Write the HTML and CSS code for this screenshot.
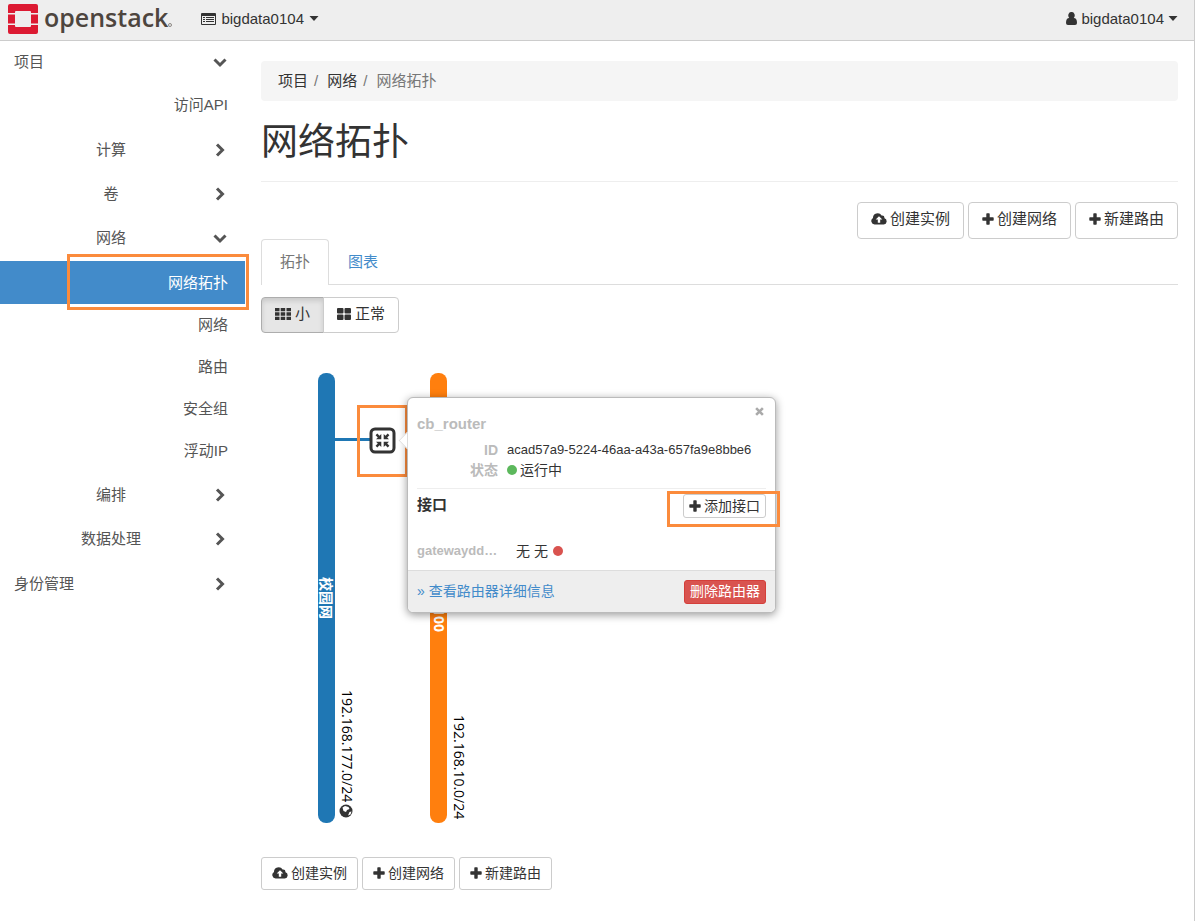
FILE: index.html
```html
<!DOCTYPE html>
<html lang="zh-CN">
<head>
<meta charset="utf-8">
<title>网络拓扑 - OpenStack</title>
<link rel="stylesheet" href="styles.css">
</head>
<body>
<svg class="defs" aria-hidden="true">
  <symbol id="i-cloud" viewBox="0 0 16 12"><path fill-rule="evenodd" d="M3.600 11.500A3.500 3.500 0 0 1 2 5 4.600 4.600 0 0 1 10.600 2.600 2.600 2.600 0 0 1 13.500 5.300 3.200 3.200 0 0 1 12.800 11.500ZM8 3.200 4.700 6.600H6.800V9.800H9.200V6.600H11.300Z"/></symbol>
  <symbol id="i-plus" viewBox="0 0 12 12"><path d="M4.300 1Q4.300 .300 5 .300H7Q7.700 .300 7.700 1V4.300H11Q11.700 4.300 11.700 5V7Q11.700 7.700 11 7.700H7.700V11Q7.700 11.700 7 11.700H5Q4.300 11.700 4.300 11V7.700H1Q.300 7.700 .300 7V5Q.300 4.300 1 4.300H4.300Z"/></symbol>
  <symbol id="i-right" viewBox="0 0 14 14"><path d="M4 1.500 9.500 7 4 12.500" fill="none" stroke="currentColor" stroke-width="3"/></symbol>
  <symbol id="i-down" viewBox="0 0 14 14"><path d="M1.500 4.500 7 10 12.500 4.500" fill="none" stroke="currentColor" stroke-width="3"/></symbol>
  <symbol id="i-caret" viewBox="0 0 10 5"><path d="M.500 0H9.500L5 5Z"/></symbol>
</svg>
<header class="topbar">
  <a class="brand" href="#">
    <svg class="brand-mark" viewBox="0 0 30 30" aria-hidden="true">
      <path fill="#dc1a32" fill-rule="evenodd" d="M2 0H28Q30 0 30 2V9H23V8Q23 7 22 7H8Q7 7 7 8V9H0V2Q0 0 2 0ZM0 10.500H7V19.500H0ZM23 10.500H30V19.500H23ZM0 21H7V22Q7 23 8 23H22Q23 23 23 22V21H30V28Q30 30 28 30H2Q0 30 0 28Z"/>
    </svg>
    <span class="brand-name">openstack</span>
    <svg width="4" height="4" viewBox="0 0 4 4" class="brand-dot" aria-hidden="true"><circle cx="2" cy="2" r="1.500" fill="none" stroke="currentColor" stroke-width="1"/></svg>
  </a>
  <button class="menu" type="button">
    <svg width="15" height="12" viewBox="0 0 15 12" aria-hidden="true"><path fill-rule="evenodd" d="M1 0H14Q15 0 15 1V11Q15 12 14 12H1Q0 12 0 11V1Q0 0 1 0ZM1 3V11H14V3Z"/><path d="M2 4H4V5H2ZM5 4H13V5H5ZM2 6H4V7H2ZM5 6H13V7H5ZM2 8H4V9H2ZM5 8H13V9H5Z"/></svg>
    bigdata0104
    <svg class="caret" aria-hidden="true"><use href="#i-caret"/></svg>
  </button>
  <button class="menu menu-user" type="button">
    <svg width="11" height="13" viewBox="0 0 11 13" aria-hidden="true"><path d="M5.500 0A3 3.500 0 0 1 7.800 6Q11 6 11 11 11 13 9 13H2Q0 13 0 11 0 6 3.200 6A3 3.500 0 0 1 5.500 0Z"/></svg>
    bigdata0104
    <svg class="caret" aria-hidden="true"><use href="#i-caret"/></svg>
  </button>
</header>
<div class="layout">
  <nav class="sidebar">
    <a class="row top first" href="#"><span>项目</span><svg class="chev" aria-hidden="true"><use href="#i-down"/></svg></a>
    <a class="row leaf tall" href="#">访问API</a>
    <a class="row group" href="#"><span>计算</span><svg class="chev" aria-hidden="true"><use href="#i-right"/></svg></a>
    <a class="row group" href="#"><span>卷</span><svg class="chev" aria-hidden="true"><use href="#i-right"/></svg></a>
    <a class="row group" href="#"><span>网络</span><svg class="chev" aria-hidden="true"><use href="#i-down"/></svg></a>
    <a class="row leaf active" href="#">网络拓扑<i class="mark mark-nav"></i></a>
    <a class="row leaf" href="#">网络</a>
    <a class="row leaf" href="#">路由</a>
    <a class="row leaf" href="#">安全组</a>
    <a class="row leaf" href="#">浮动IP</a>
    <a class="row group" href="#"><span>编排</span><svg class="chev" aria-hidden="true"><use href="#i-right"/></svg></a>
    <a class="row group" href="#"><span>数据处理</span><svg class="chev" aria-hidden="true"><use href="#i-right"/></svg></a>
    <a class="row top" href="#"><span>身份管理</span><svg class="chev" aria-hidden="true"><use href="#i-right"/></svg></a>
  </nav>
  <main class="content">
    <ol class="crumbs">
      <li><a href="#">项目</a></li>
      <li><a href="#">网络</a></li>
      <li>网络拓扑</li>
    </ol>
    <h1>网络拓扑</h1>
    <div class="actions">
      <button class="btn" type="button"><svg class="cloud" aria-hidden="true"><use href="#i-cloud"/></svg>创建实例</button>
      <button class="btn" type="button"><svg class="plus" aria-hidden="true"><use href="#i-plus"/></svg>创建网络</button>
      <button class="btn" type="button"><svg class="plus" aria-hidden="true"><use href="#i-plus"/></svg>新建路由</button>
    </div>
    <div class="tabs">
      <a class="tab current" href="#">拓扑</a>
      <a class="tab" href="#">图表</a>
    </div>
    <div class="toggle">
      <button class="btn pressed" type="button"><svg width="16" height="12" viewBox="0 0 16 12" aria-hidden="true"><path d="M0 0H4.500V3.300H0ZM5.700 0H10.200V3.300H5.700ZM11.500 0H16V3.300H11.500ZM0 4.300H4.500V7.700H0ZM5.700 4.300H10.200V7.700H5.700ZM11.500 4.300H16V7.700H11.500ZM0 8.700H4.500V12H0ZM5.700 8.700H10.200V12H5.700ZM11.500 8.700H16V12H11.500Z"/></svg>小</button>
      <button class="btn" type="button"><svg width="14" height="12" viewBox="0 0 14 12" aria-hidden="true"><path d="M1 0H5.500Q6.500 0 6.500 1V4.500Q6.500 5.500 5.500 5.500H1Q0 5.500 0 4.500V1Q0 0 1 0ZM8.500 0H13Q14 0 14 1V4.500Q14 5.500 13 5.500H8.500Q7.500 5.500 7.500 4.500V1Q7.500 0 8.500 0ZM1 6.500H5.500Q6.500 6.500 6.500 7.500V11Q6.500 12 5.500 12H1Q0 12 0 11V7.500Q0 6.500 1 6.500ZM8.500 6.500H13Q14 6.500 14 7.500V11Q14 12 13 12H8.500Q7.500 12 7.500 11V7.500Q7.500 6.500 8.500 6.500Z"/></svg>正常</button>
    </div>
    <section class="topology">
      <svg class="canvas" width="520" height="512" viewBox="0 0 520 512">
        <rect x="57" y="40" width="17" height="450" rx="8" fill="#1f77b4"/>
        <rect x="169" y="40" width="17" height="450" rx="8" fill="#ff7f0e"/>
        <rect x="74" y="105" width="36" height="3" fill="#1f77b4"/>
        <text class="net-name" transform="translate(60 265) rotate(90)" text-anchor="middle">校园网</text>
        <text class="net-name" transform="translate(173 299) rotate(90)" text-anchor="end">cb_net_100</text>
        <text class="cidr" transform="translate(81 357) rotate(90)">192.168.177.0/24</text>
        <text class="cidr" transform="translate(193 382) rotate(90)">192.168.10.0/24</text>
        <circle cx="85" cy="478" r="6.500"/>
        <path fill="#fff" d="M81.500 474.500 84 473 87.500 474 88.500 476 86 477 85 479 82.500 478ZM88.500 479 90.500 478.500 89.500 481.500 87 482.500Z"/>
        <rect x="110" y="96" width="23" height="23" rx="4" fill="#fff" stroke="#333" stroke-width="3"/>
        <g fill="#333"><path id="arr" d="M116.300 100.600 118.500 102.800 120.300 101V106.300H115L116.800 104.500 114.600 102.300Z"/><use href="#arr" transform="rotate(90 121.500 107.500)"/><use href="#arr" transform="rotate(180 121.500 107.500)"/><use href="#arr" transform="rotate(270 121.500 107.500)"/></g>
      </svg>
      <i class="mark mark-router"></i>
      <div class="popover">
        <button class="close" type="button" aria-label="关闭"><svg width="9" height="9" viewBox="0 0 8 8" aria-hidden="true"><path d="M1 1 7 7M7 1 1 7" stroke="currentColor" stroke-width="2.300"/></svg></button>
        <h2>cb_router</h2>
        <dl>
          <dt>ID</dt><dd class="uuid">acad57a9-5224-46aa-a43a-657fa9e8bbe6</dd>
          <dt>状态</dt><dd><i class="dot up"></i>运行中</dd>
        </dl>
        <div class="ports-head">
          <h3>接口</h3>
          <button class="btn mini" type="button"><svg class="plus" aria-hidden="true"><use href="#i-plus"/></svg>添加接口</button>
          <i class="mark mark-add"></i>
        </div>
        <div class="port"><span class="port-name">gatewaydd…</span><span>无 无</span><i class="dot down"></i></div>
        <footer>
          <a href="#">» 查看路由器详细信息</a>
          <button class="btn mini danger" type="button">删除路由器</button>
        </footer>
      </div>
    </section>
    <div class="actions small">
      <button class="btn" type="button"><svg class="cloud" aria-hidden="true"><use href="#i-cloud"/></svg>创建实例</button>
      <button class="btn" type="button"><svg class="plus" aria-hidden="true"><use href="#i-plus"/></svg>创建网络</button>
      <button class="btn" type="button"><svg class="plus" aria-hidden="true"><use href="#i-plus"/></svg>新建路由</button>
    </div>
  </main>
</div>
</body>
</html>
```
FILE: styles.css
```css
* { box-sizing: border-box; }
body {
  margin: 0;
  min-height: 100vh;
  border-right: 1px solid #ccc;
  background: #fff;
  color: #333;
  font: 15px/20px "Liberation Sans", "Noto Sans CJK SC", sans-serif;
}
svg { fill: currentColor; flex: none; }
a { color: #428bca; text-decoration: none; }
button { font: inherit; color: inherit; }
.defs { position: absolute; width: 0; height: 0; }

.topbar {
  display: flex;
  align-items: center;
  height: 41px;
  padding: 0 16px 3px 8px;
  background: #eee;
  border-bottom: 1px solid #ccc;
}
.brand { display: flex; align-items: center; color: #4d453e; }
.brand-mark { width: 30px; height: 30px; margin-right: 6px; }
.brand-name { font: 600 25px/34px "Open Sans", sans-serif; padding-bottom: 3px; }
.brand-dot { margin-top: 12px; opacity: .6; }
.menu {
  display: flex;
  align-items: center;
  gap: 5px;
  margin-left: 29px;
  padding: 0;
  border: 0;
  background: none;
}
.menu-user { margin-left: auto; gap: 4px; }
.caret { width: 10px; height: 5px; }

.layout { display: grid; grid-template-columns: 245px minmax(0, 1fr); }
.row {
  position: relative;
  display: flex;
  align-items: center;
  height: 44px;
  padding: 0 18px 0 14px;
  color: #555;
}
.first { height: 42px; }
.top { justify-content: space-between; }
.group span { width: 194px; text-align: center; }
.group .chev { margin-left: auto; }
.chev { width: 14px; height: 14px; }
.leaf { height: 42px; justify-content: flex-end; padding-right: 17px; }
.tall { height: 44px; }
.leaf + .group, .group + .top { margin-top: 1px; }
.active { height: 43px; margin-top: 1px; background: #428bca; color: #fff; }

.mark { position: absolute; border: 3px solid #fb8b3c; pointer-events: none; }
.mark-nav { left: 67px; right: -4px; top: -7px; bottom: -6px; }
.mark-router { left: 96px; top: 72px; width: 51px; height: 72px; }
.mark-add { left: 250px; right: -14px; top: -3px; height: 36px; }

.content { padding: 20px 16px; }
.crumbs {
  display: flex;
  margin: 0 0 20px;
  padding: 10px 17px;
  list-style: none;
  border-radius: 4px;
  background: #f5f5f5;
  color: #777;
}
.crumbs a { color: #333; }
.crumbs li + li::before { content: "/"; padding: 0 9px 0 6px; color: #777; }
h1 {
  margin: 0 0 20px;
  padding-bottom: 16px;
  border-bottom: 1px solid #eee;
  font-size: 37px;
  line-height: 44px;
  font-weight: 400;
}
.actions { display: flex; justify-content: flex-end; gap: 4px; }
.btn {
  display: flex;
  align-items: center;
  gap: 3px;
  height: 37px;
  padding: 0 13px 3px;
  border: 1px solid #ccc;
  border-radius: 4px;
  background: #fff;
}
.cloud { width: 16px; height: 12px; }
.plus { width: 12px; height: 12px; }
.tabs { display: flex; border-bottom: 1px solid #ddd; }
.tab { padding: 12px 18px; border: 1px solid transparent; border-bottom: 0; }
.current {
  margin-bottom: -1px;
  border-color: #ddd;
  border-radius: 4px 4px 0 0;
  background: #fff;
  color: #777;
}
.toggle { display: flex; margin-top: 12px; }
.toggle .btn { gap: 4px; height: 36px; border-radius: 0 4px 4px 0; margin-left: -1px; }
.toggle .pressed {
  margin-left: 0;
  border-color: #adadad;
  border-radius: 4px 0 0 4px;
  background: #e6e6e6;
  box-shadow: inset 0 3px 5px rgba(0, 0, 0, .125);
}

.topology { position: relative; }
.canvas { display: block; }
.net-name { fill: #fff; font: bold 14px "Open Sans", "Noto Sans CJK SC", sans-serif; }
.cidr { fill: #000; font: 14px "Open Sans", sans-serif; }
.popover {
  position: absolute;
  left: 146px;
  top: 64px;
  width: 369px;
  border: 1px solid #bbb;
  border-radius: 6px;
  background: #fff;
  box-shadow: 0 2px 8px rgba(0, 0, 0, .4);
  font-size: 14px;
}
.popover::before {
  content: "";
  position: absolute;
  left: -7px;
  top: 36px;
  width: 12px;
  height: 12px;
  border: 1px solid #ddd;
  border-width: 0 0 1px 1px;
  background: #fff;
  clip-path: polygon(0 0, 50% 50%, 100% 100%, 0 100%);
  transform: rotate(45deg);
}
.close { position: absolute; right: 11px; top: 9px; padding: 0; border: 0; background: none; color: #aaa; line-height: 8px; }
h2 { margin: 0; padding: 16px 9px 6px; color: #bbb; font-size: 15px; line-height: 20px; }
dl {
  display: grid;
  grid-template-columns: 81px 1fr;
  column-gap: 9px;
  margin: 0 9px;
  padding-bottom: 8px;
  border-bottom: 1px solid #eee;
}
dt { color: #bbb; font-weight: bold; text-align: right; font-size: 14px; }
dd { display: flex; align-items: center; margin: 0; }
.uuid { font-size: 13px; }
.dot { width: 10px; height: 10px; border-radius: 50%; }
.up { margin-right: 3px; background: #5cb85c; }
.down { margin-left: 5px; background: #d9534f; }
.ports-head {
  position: relative;
  display: flex;
  justify-content: space-between;
  align-items: center;
  margin: 5px 9px 21px;
}
h3 { margin: 0; padding-bottom: 2px; font-size: 15px; line-height: 20px; }
.mini { height: 24px; padding: 0 5px 1px; border-radius: 3px; }
.port { display: flex; align-items: center; padding: 2px 9px 9px; }
.port-name { width: 99px; color: #bbb; font-size: 13px; font-weight: bold; }
footer {
  display: flex;
  justify-content: space-between;
  align-items: center;
  height: 42px;
  padding: 0 9px;
  border-top: 1px solid #ddd;
  border-radius: 0 0 6px 6px;
  background: #eee;
}
footer a { padding-bottom: 2px; }
.danger { background: #d9534f; border-color: #d43f3a; color: #fff; }
.small { justify-content: flex-start; margin-top: 12px; font-size: 14px; }
.small .btn { height: 33px; padding: 0 10px 2px; border-radius: 3px; }
```
